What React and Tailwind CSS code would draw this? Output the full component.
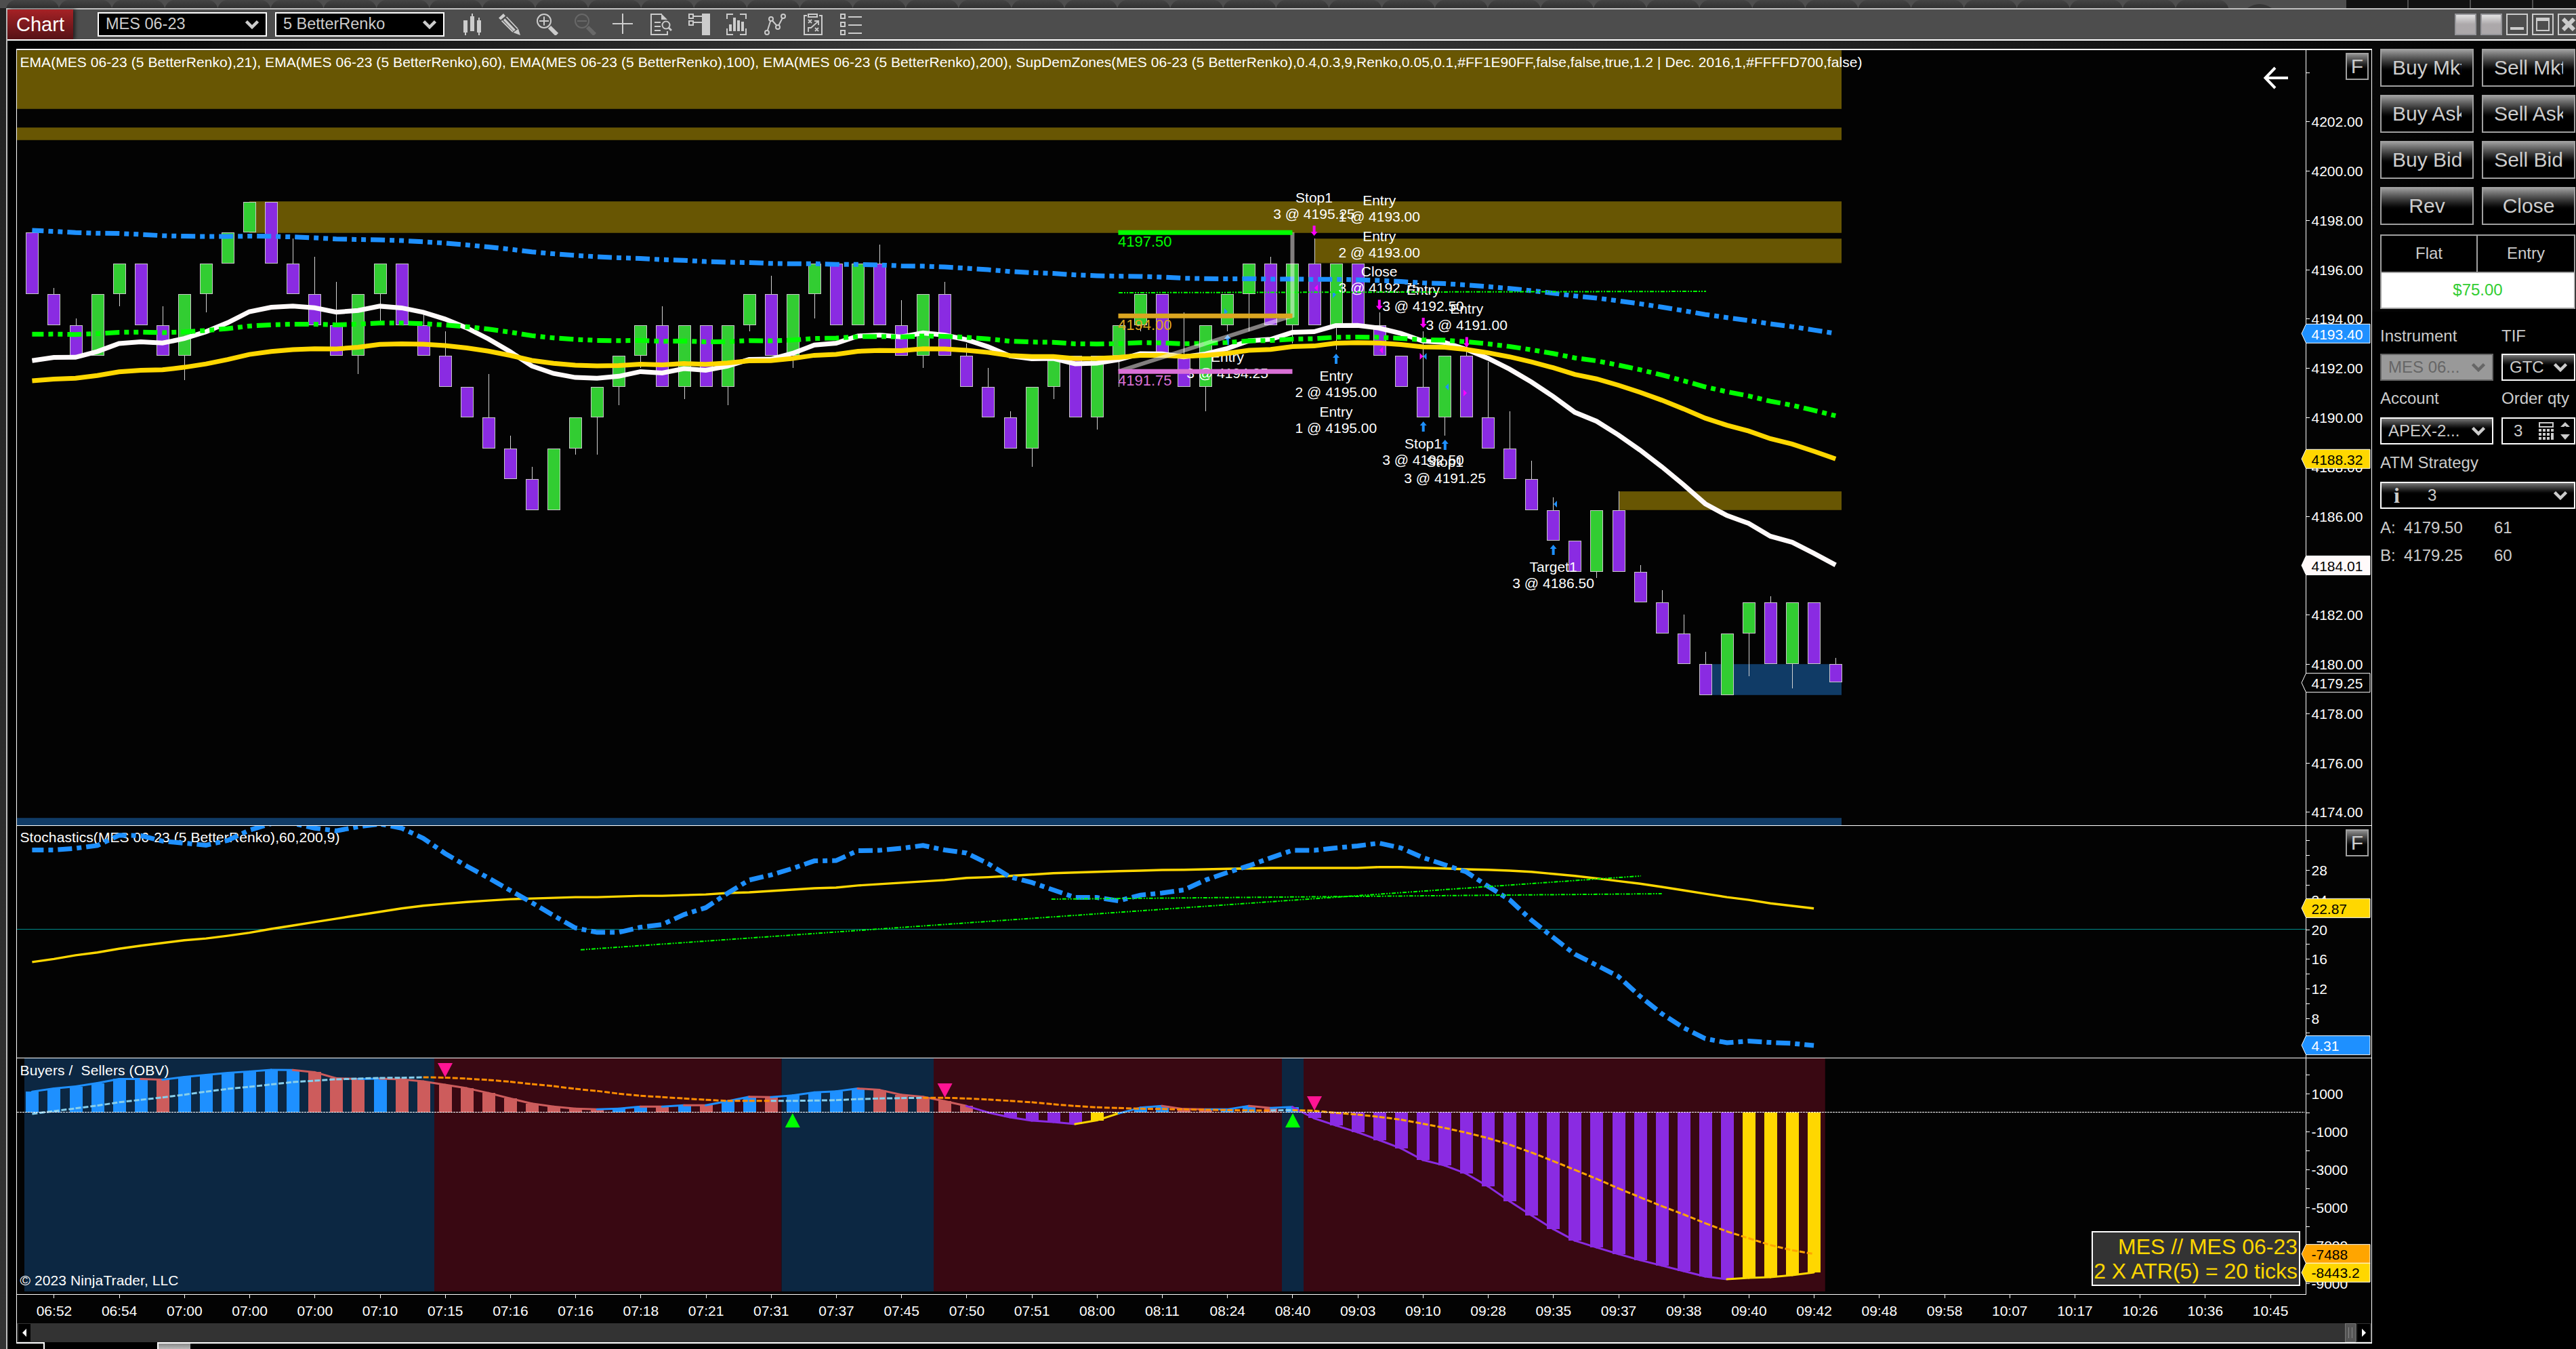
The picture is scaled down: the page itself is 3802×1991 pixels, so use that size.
import { useState } from 'react';

const FONT = "font-['Liberation_Sans',Arial,sans-serif]";

// Chart geometry
const X0 = 47.4;
const STEP = 32.07;
const barX = (i) => X0 + STEP * i;
const priceY = (p) => 179.2 + (4202 - p) * 36.4;
const stochY = (v) => 1371.5 - (v - 20) * 10.92;
const obvY = (v) => 1641.5 - v * 0.028;
// lower panes store their series in pane units
const paneY = (v) => 1200 + v / 1.9823;
// body levels are 5 ticks (1.25 points) apart
const level = (n) => 4198.75 - n * 1.25;

// [direction, top level, bottom level, high, low]
const BARS = [
  ['d', 1, 3], ['d', 3, 4, 4195.25], ['d', 4, 5, 4194], ['u', 3, 5], ['u', 2, 3, 0, 4194.5],
  ['d', 2, 4], ['d', 4, 5, 4194.5], ['u', 3, 5, 0, 4191.5], ['u', 2, 3, 0, 4194.25], ['u', 1, 2],
  ['u', 0, 1], ['d', 0, 2], ['d', 2, 3, 4197.25], ['d', 3, 4, 4196.5], ['d', 4, 5, 4195.5],
  ['u', 3, 5, 0, 4191.75], ['u', 2, 3, 0, 4193.75], ['d', 2, 4], ['d', 4, 5, 4194.25], ['d', 5, 6, 4193.5],
  ['d', 6, 7], ['d', 7, 8, 4191.75], ['d', 8, 9, 4189.25], ['d', 9, 10, 4188], ['u', 8, 10],
  ['u', 7, 8, 0, 4188.5], ['u', 6, 7, 0, 4188.5], ['u', 5, 6, 0, 4190.5], ['u', 4, 5, 0, 4192], ['d', 4, 6, 4194.5],
  ['u', 4, 6, 0, 4190.75], ['d', 4, 6], ['u', 4, 6, 0, 4190.5], ['u', 3, 4, 0, 4193.5], ['d', 3, 5, 4195.75],
  ['u', 3, 5, 0, 4192], ['u', 2, 3, 0, 4194], ['d', 2, 4], ['u', 2, 4], ['d', 2, 4, 4197],
  ['d', 4, 5, 4194.75], ['u', 3, 5, 0, 4192], ['d', 3, 5, 4195.5], ['d', 5, 6, 4193], ['d', 6, 7, 4192],
  ['d', 7, 8, 4190.25], ['u', 6, 8, 0, 4188], ['u', 5, 6, 0, 4190.75], ['d', 5, 7], ['u', 5, 7, 0, 4189.5],
  ['u', 4, 5, 0, 4191.25], ['u', 3, 4, 0, 4193.5], ['d', 3, 5], ['d', 5, 6, 4194.25], ['u', 4, 6, 0, 4190.25],
  ['u', 3, 4, 0, 4193.5], ['u', 2, 3, 0, 4193.5], ['d', 2, 4, 4196.5], ['u', 2, 4, 0, 4193], ['d', 2, 4, 4197.25],
  ['u', 2, 4, 0, 4192.75], ['d', 2, 4], ['d', 4, 5, 4194.25], ['d', 5, 6], ['d', 6, 7, 4193.5],
  ['u', 5, 7, 0, 4189.25], ['d', 5, 7, 4193], ['d', 7, 8, 4192.25], ['d', 8, 9, 4190.25], ['d', 9, 10, 4188.25],
  ['d', 10, 11, 4186.75], ['d', 11, 12], ['u', 10, 12, 0, 4183.5], ['d', 10, 12, 4187], ['d', 12, 13, 4184],
  ['d', 13, 14, 4183], ['d', 14, 15, 4182], ['d', 15, 16, 4180.5], ['u', 14, 16], ['u', 13, 14, 0, 4179.5],
  ['d', 13, 15, 4182.75], ['u', 13, 15, 0, 4179], ['d', 13, 15], ['d', 15, 15.6, 4180.25],
];

const CLOSES = BARS.map(([dir, top, bottom]) => level(dir === 'u' ? top : bottom));

const ema = (period, seed) => {
  const k = 2 / (period + 1);
  let v = seed;
  return CLOSES.map((c, i) => {
    if (i > 0) v += k * (c - v);
    return v;
  });
};

const toPoints = (values, fy) => values.map((v, i) => `${barX(i).toFixed(1)},${fy(v).toFixed(1)}`).join(' ');

const STOCH_K = [
  108, 108, 103, 95, 65, 66, 82, 88, 94, 80, 50, 31, 30, 44, 52, 40, 32, 44, 74, 118, 155, 190, 226, 262, 300, 336, 349, 349,
  334, 326, 297, 277, 235, 196, 181, 162, 140, 139, 110, 109, 103, 95, 108, 117, 148, 187, 203, 225, 247, 247, 257, 240, 234,
  225, 196, 174, 154, 131, 109, 109, 102, 96, 88, 102, 130, 151, 172, 214, 254, 313, 364, 413, 445, 478, 536, 587, 628, 660,
  672, 667, 671, 674, 680,
];

const STOCH_D = [
  436, 427, 416, 408, 397, 388, 380, 372, 367, 359, 350, 339, 329, 319, 309, 299, 289, 279, 271, 265.5, 260, 256, 252, 250,
  248, 246, 246, 244, 242, 242, 240, 238, 234, 232, 228, 224, 220, 218, 212, 208, 204, 200, 196, 190, 187.5, 184, 180, 176,
  174, 172, 170, 168.5, 166.5, 166, 164.5, 163, 162, 160.5, 160.5, 160.5, 160.5, 160.5, 158, 158, 160, 162, 164.5, 166,
  168.5, 172, 178, 184, 191, 199, 206.5, 216, 226, 236, 246, 254, 264, 271.5, 279,
];

const OBV = [
  815, 806, 800, 790, 778, 778, 780, 772, 766, 760, 756, 751.5, 752, 758, 776, 778, 777, 779, 785, 795, 805, 819, 835, 850,
  859, 865, 867, 865, 859, 859, 855, 855, 843, 830, 831, 826, 817, 814, 806, 810, 824, 830, 843, 857, 876, 890, 900, 904, 910,
  899, 879, 862, 857, 866, 867, 867, 857, 863, 860, 893, 914, 934, 957, 981, 1015, 1031, 1055, 1092, 1136, 1177, 1217, 1251,
  1271, 1290, 1308, 1324, 1340, 1356, 1364, 1360, 1358, 1352, 1344,
];
// one letter for each bar: b = rising, r = falling, p = below zero, y = recovering
const OBV_KEYS = 'bbbbbbrbbbbbbrrrbrrrrrrrrrrbbrbrbbrbbbbrrrrrpppppyybbrrbbrb' + 'p'.repeat(20) + 'yyyy';

const OBV_AVG = [
  880, 872, 864, 856, 846, 839, 832, 824, 815, 807, 801, 794, 787, 783, 779, 777, 775, 774.5, 773, 774, 777, 781, 786, 793,
  799, 807, 813, 821, 827, 831, 835, 839, 842, 842, 842, 842, 841, 840, 837, 835, 834, 833, 833, 835, 838, 842, 846, 852, 857,
  861, 863, 865, 866, 867, 868, 869, 870, 870, 869, 871, 877, 882, 889, 897, 909, 921, 935, 951, 970, 993, 1018, 1044, 1070,
  1098, 1124, 1150, 1174, 1200, 1224, 1244, 1264, 1279, 1290,
];

const OBV_COLORS = { b: '#1e90ff', r: '#cd5c5c', p: '#8a2be2', y: '#ffd700' };

const TIMES = [
  '06:52', '06:54', '07:00', '07:00', '07:00', '07:10', '07:15', '07:16', '07:16', '07:18', '07:21', '07:31', '07:37', '07:45',
  '07:50', '07:51', '08:00', '08:11', '08:24', '08:40', '09:03', '09:10', '09:28', '09:35', '09:37', '09:38', '09:40', '09:42',
  '09:48', '09:58', '10:07', '10:17', '10:26', '10:36', '10:45',
];

// [x, first baseline, name, fill]
const EXECUTIONS = [
  [1939.5, 299, 'Stop1', '3 @ 4195.25'],
  [2035.7, 303, 'Entry', '1 @ 4193.00'],
  [2035.7, 356, 'Entry', '2 @ 4193.00'],
  [2035.7, 408, 'Close', '3 @ 4192.75'],
  [2100.5, 435, 'Entry', '3 @ 4192.50'],
  [2164.7, 463, 'Entry', '3 @ 4191.00'],
  [1971.9, 562, 'Entry', '2 @ 4195.00'],
  [1971.9, 614.5, 'Entry', '1 @ 4195.00'],
  [2100.5, 662, 'Stop1', '3 @ 4192.50'],
  [2132.6, 689, 'Stop1', '3 @ 4191.25'],
  [1811.6, 534, 'Entry', '3 @ 4194.25'],
  [2292.6, 844, 'Target1', '3 @ 4186.50'],
];

const UP_ARROWS = [[1811.8, 494], [1972, 522], [2100.7, 622], [2132.8, 649], [2292.6, 804]];
const DOWN_ARROWS = [[1939.6, 348], [2035.8, 457.5], [2100.7, 484], [2164.8, 512.5]];
// [tip x, centre y, side the base is on, colour]
const FILLS = [
  [1812, 460, -1, '#1e90ff'], [1972, 435, -1, '#1e90ff'], [1940, 425, 1, '#ff00ff'], [2036, 517, 1, '#ff00ff'],
  [2100.5, 526, -1, '#ff00ff'], [2100.5, 526, 1, '#1e90ff'], [2133, 571, 1, '#1e90ff'], [2165, 580, -1, '#ff00ff'],
  [2293, 744, 1, '#1e90ff'],
];

function PriceTag({ y, text, fill, color = '#fff' }) {
  return (
    <g>
      <path d={`M3397 ${y}L3403.5 ${y - 14}H3498V${y + 14}H3403.5Z`} fill={fill} stroke="#fff" />
      <text x="3411.5" y={y + 8.2} fill={color}>{text}</text>
    </g>
  );
}

function Tick({ y, label }) {
  return (
    <g>
      <path d={`M3403 ${Math.round(y) + 0.5}h6`} stroke="#fff" />
      {label && <text x="3411.5" y={y + 8} fill="#fff">{label}</text>}
    </g>
  );
}

function AxisLine() {
  return <path d="M3403.5 74V1911" stroke="#fff" />;
}

function Candles() {
  return (
    <g shapeRendering="crispEdges">
      {BARS.map(([dir, top, bottom, high, low], i) => {
        const x = Math.round(barX(i));
        const y1 = Math.round(priceY(level(top)));
        const y2 = Math.round(priceY(level(bottom)));
        return (
          <g key={i}>
            {high ? <rect x={x} y={priceY(high)} width="1" height={y1 - priceY(high)} fill="#d3d3d3" /> : null}
            {low ? <rect x={x} y={y2} width="1" height={priceY(low) - y2} fill="#d3d3d3" /> : null}
            <rect x={x - 9} y={y1} width="19" height={y2 - y1} fill="#c8c8c8" />
            <rect x={x - 8} y={y1 + 1} width="17" height={y2 - y1 - 2} fill={dir === 'u' ? '#32cd32' : '#8a2be2'} />
          </g>
        );
      })}
    </g>
  );
}

function Zone({ x, y, width, height, blue }) {
  return (
    <g>
      <rect x={x} y={y} width={width} height={height} fill={blue ? '#0d2f52' : '#4f4203'} />
      <rect x={x} y={y + 1} width={width} height={height - 2} fill={blue ? '#103b66' : '#685603'} />
    </g>
  );
}

function PricePane() {
  const dash = '21 7 7 7 7 7';
  return (
    <svg className="block" width="3475" height="1145" viewBox="25 74 3475 1145" fontSize="21">
      <Zone x={25} y={74} width={2693} height={87} />
      <Zone x={25} y={188} width={2693} height={19} />
      <Zone x={368} y={297} width={2350} height={47} />
      <Zone x={1940} y={352} width={778} height={36.5} />
      <Zone x={2389} y={725} width={329} height={28} />
      <Zone x={2517} y={980} width={201} height={46} blue />
      <Zone x={25} y={1207} width={2693} height={14} blue />
      <Candles />

      {UP_ARROWS.map(([x, y]) => (
        <path key={`u${x}`} d={`M${x} ${y}l5 6h-3v9h-4v-9h-3z`} fill="#1e90ff" />
      ))}
      {DOWN_ARROWS.map(([x, y]) => (
        <path key={`d${x}`} d={`M${x} ${y}l5 -6h-3v-9h-4v9h-3z`} fill="#ff00ff" />
      ))}
      {FILLS.map(([x, y, side, color], i) => (
        <path key={i} d={`M${x} ${y}l${side * 5} -5v10z`} fill={color} />
      ))}
      <g fill="#fff" textAnchor="middle">
        {EXECUTIONS.map(([x, y, name, fill], i) => (
          <g key={i}>
            <text x={x} y={y}>{name}</text>
            <text x={x} y={y + 24}>{fill}</text>
          </g>
        ))}
      </g>

      {/* Moving averages */}
      <g fill="none" strokeWidth="7">
        <polyline points={toPoints(ema(21, 4192.3), priceY)} stroke="#fffafa" />
        <polyline points={toPoints(ema(60, 4191.48), priceY)} stroke="#ffd700" />
        <polyline points={toPoints(ema(100, 4193.37), priceY)} stroke="#00ff00" strokeDasharray={dash} strokeDashoffset="4" />
        <polyline points={toPoints(ema(200, 4197.58), priceY)} stroke="#1e90ff" strokeDasharray={dash} strokeDashoffset="4" />
      </g>

      {/* Risk / reward */}
      <path d="M1651 432L2518 430" stroke="#00ff00" strokeWidth="2" strokeDasharray="6 2 2 2 2 2" />
      <path d="M1651 548L1907.5 466V343" fill="none" stroke="#fffafa" strokeOpacity="0.5" strokeWidth="6" />
      <g strokeWidth="7">
        <path d="M1650.5 343.3h257" stroke="#00ff00" />
        <path d="M1650.5 466.3h257" stroke="#daa520" />
        <path d="M1650.5 548.2h257" stroke="#da70d6" />
      </g>
      <g fontSize="22">
        <text x="1650" y="364" fill="#00ff00">4197.50</text>
        <text x="1650" y="487" fill="#daa520">4194.00</text>
        <text x="1650" y="569" fill="#da70d6">4191.75</text>
      </g>

      <text x="29.5" y="98.5" fill="#fff" textLength="2719">
        EMA(MES 06-23 (5 BetterRenko),21), EMA(MES 06-23 (5 BetterRenko),60), EMA(MES 06-23 (5 BetterRenko),100), EMA(MES 06-23 (5 BetterRenko),200), SupDemZones(MES 06-23 (5 BetterRenko),0.4,0.3,9,Renko,0.05,0.1,#FF1E90FF,false,false,true,1.2 | Dec. 2016,1,#FFFFD700,false)
      </text>
      <path d="M3377 115H3344M3358 100L3343.5 115L3358 130" fill="none" stroke="#fff" strokeWidth="4" />

      <AxisLine />
      <Tick y={106.5} />
      {Array.from({ length: 15 }, (_, i) => 4202 - i * 2).map((p) => (
        <Tick key={p} y={priceY(p)} label={p.toFixed(2)} />
      ))}
      <PriceTag y={492.3} text="4193.40" fill="#1e90ff" />
      <PriceTag y={677.3} text="4188.32" fill="#ffd700" color="#000" />
      <PriceTag y={834.5} text="4184.01" fill="#fffafa" color="#000" />
      <PriceTag y={1007.7} text="4179.25" fill="#030303" />
      <path d="M25 1218.5H3500" stroke="#fff" />
    </svg>
  );
}

function StochasticsPane() {
  return (
    <svg className="block" width="3475" height="343" viewBox="25 1219 3475 343" fontSize="21">
      <path d="M25 1371.5H3403" stroke="#008b8b" />
      <text x="29.5" y="1243" fill="#fff" textLength="472">Stochastics(MES 06-23 (5 BetterRenko),60,200,9)</text>
      <polyline points={toPoints(STOCH_D, paneY)} fill="none" stroke="#ffd700" strokeWidth="3.4" />
      <polyline
        points={toPoints(STOCH_K, paneY)}
        fill="none"
        stroke="#1e90ff"
        strokeWidth="7"
        strokeDasharray="21 7 7 7"
        strokeDashoffset="4"
      />
      <g stroke="#00ff00" strokeWidth="2" strokeDasharray="6 2 2 2 2 2">
        <path d="M857 1401.8L2422 1292.8" />
        <path d="M1551.8 1327L2452.7 1319" />
      </g>
      <AxisLine />
      {Array.from({ length: 15 }, (_, i) => 4 + i * 2).map((v) => (
        <Tick key={v} y={stochY(v)} label={v % 4 === 0 && v < 32 && v > 4 ? String(v) : null} />
      ))}
      <PriceTag y={1340.3} text="22.87" fill="#ffd700" color="#000" />
      <PriceTag y={1542.7} text="4.31" fill="#1e90ff" />
      <path d="M25 1561.5H3500" stroke="#fff" />
    </svg>
  );
}

function ObvPane() {
  const zero = 1641.5;
  const regions = [[36, 641, 0], [641, 1153.6, 1], [1153.6, 1378, 0], [1378, 1892, 1], [1892, 1924, 0], [1924, 2693.8, 1]];
  const avgColor = (i) => {
    if (i < 18 || (i >= 34 && i < 41) || i === 57) return '#87ceeb';
    return i >= 58 ? '#ffa500' : '#ff8c00';
  };
  return (
    <svg className="block" width="3475" height="349" viewBox="25 1562 3475 349" fontSize="21">
      {regions.map(([a, b, red]) => (
        <rect key={a} x={a} y="1562" width={b - a} height="344" fill={red ? '#390812' : '#0c2742'} />
      ))}
      <g shapeRendering="crispEdges">
        {OBV.map((v, i) => {
          const y = paneY(v);
          return (
            <rect
              key={i}
              x={Math.round(barX(i)) - 9}
              y={Math.min(y, zero)}
              width="19"
              height={Math.abs(y - zero)}
              fill={OBV_COLORS[OBV_KEYS[i]]}
            />
          );
        })}
      </g>
      {OBV.slice(1).map((v, i) => (
        <path
          key={i}
          d={`M${barX(i)} ${paneY(OBV[i])}L${barX(i + 1)} ${paneY(v)}`}
          stroke={OBV_COLORS[OBV_KEYS[i + 1]]}
          strokeWidth="3"
          strokeLinecap="round"
        />
      ))}
      {OBV_AVG.slice(1).map((v, i) => (
        <path
          key={i}
          d={`M${barX(i)} ${paneY(OBV_AVG[i])}L${barX(i + 1)} ${paneY(v)}`}
          stroke={avgColor(i)}
          strokeWidth="3"
          strokeDasharray="8 3"
        />
      ))}
      <path d="M25 1641.5H3402" stroke="#fff" strokeDasharray="3 1" />
      {[[657, 1590], [1394.6, 1620], [1940, 1639]].map(([x, y]) => (
        <path key={x} d={`M${x} ${y}l-11 -21h22z`} fill="#ff1493" />
      ))}
      {[1169.8, 1908].map((x) => (
        <path key={x} d={`M${x} 1643l-11 21h22z`} fill="#00ff00" />
      ))}
      <text x="29.5" y="1586.5" fill="#fff" xmlSpace="preserve" textLength="220">{'Buyers /  Sellers (OBV)'}</text>
      <text x="29.5" y="1896.5" fill="#fff" textLength="234">© 2023 NinjaTrader, LLC</text>
      <AxisLine />
      {Array.from({ length: 12 }, (_, i) => 2000 - i * 1000).map((v) => (
        <Tick key={v} y={obvY(v)} label={Math.abs(v) % 2000 === 1000 ? String(v) : null} />
      ))}
      <PriceTag y={1850.7} text="-7488" fill="#ffa500" color="#000" />
      <PriceTag y={1878.2} text="-8443.2" fill="#ffd700" color="#000" />
      <path d="M25 1910.5H3404" stroke="#fff" />
    </svg>
  );
}

function TimeAxis() {
  return (
    <svg className="block" width="3475" height="42" viewBox="25 1911 3475 42" fontSize="21">
      {TIMES.map((t, i) => (
        <g key={i}>
          <path d={`M${Math.round(barX(1 + i * 3)) + 0.5} 1911v5`} stroke="#fff" />
          <text x={barX(1 + i * 3) + 0.5} y="1941.5" fill="#fff" textAnchor="middle">{t}</text>
        </g>
      ))}
    </svg>
  );
}

function FixedButton({ className }) {
  return (
    <button
      type="button"
      className={`absolute flex h-10 w-[34px] items-center justify-center border-2 border-[#a0a0a0] bg-gradient-to-b from-[#8f8f8f] to-black to-70% text-[30px] leading-none text-[#ccc] ${className}`}
    >
      F
    </button>
  );
}

function Chevron({ className = 'text-[#ccc]' }) {
  return (
    <svg className={`shrink-0 ${className}`} width="20" height="14" viewBox="0 0 20 14">
      <path d="M1.5 2.5L10 11L18.5 2.5" fill="none" stroke="currentColor" strokeWidth="4.5" />
    </svg>
  );
}

function ToolIcon({ children, dim }) {
  return (
    <svg
      className={dim ? 'text-[#686868]' : 'text-[#ccc]'}
      width="32"
      height="32"
      viewBox="0 0 32 32"
      fill="none"
      stroke="currentColor"
      strokeWidth="2"
    >
      {children}
    </svg>
  );
}

function Toolbar() {
  return (
    <div className="flex h-11 items-center bg-[#4d4d4d] text-[23.5px] leading-none text-[#ccc]">
      <div className="flex h-11 w-[97px] items-center justify-center bg-gradient-to-b from-[#a62125] to-[#561216] text-[29px] text-white shadow-[3px_0_5px_#222]">
        Chart
      </div>
      <div className="ml-9 flex h-9 w-[250px] items-center justify-between border-2 border-white bg-black pl-2.5 pr-2.5">
        MES 06-23
        <Chevron />
      </div>
      <div className="ml-3 flex h-9 w-[250px] items-center justify-between border-2 border-white bg-black pl-2.5 pr-2.5">
        5 BetterRenko
        <Chevron />
      </div>
      <div className="ml-6 flex gap-6">
        {/* candles */}
        <ToolIcon>
          <path d="M4 10h6v18H4zM6 28h2v4H6zM14 4h6v22h-6zM16 0h2v4h-2zM24 10h6v18h-6zM26 6h2v4h-2zM26 28h2v4h-2z" fill="currentColor" stroke="none" />
        </ToolIcon>
        {/* pencil */}
        <ToolIcon>
          <path d="M0 6.5L7 0L10 3.5L3 9.5zM21.5 28L29 22.5L32 32z" fill="currentColor" stroke="none" />
          <path d="M4.5 10.5L21 27M11.5 5L28 22.5" strokeWidth="1.8" />
          <path d="M8 8.5L23.5 25" strokeWidth="3.4" />
        </ToolIcon>
        {/* zoom in */}
        <ToolIcon>
          <circle cx="11" cy="11" r="10" />
          <path d="M11 4.5v13M4 11h14" />
          <path d="M19 20L30 31" strokeWidth="6" />
        </ToolIcon>
        {/* zoom out */}
        <ToolIcon dim>
          <circle cx="11" cy="11" r="10" />
          <path d="M4 11h14" />
          <path d="M19 20L30 31" strokeWidth="6" />
        </ToolIcon>
        {/* crosshair */}
        <ToolIcon>
          <path d="M15 0v30M0 15h30" />
        </ToolIcon>
        {/* data box */}
        <ToolIcon>
          <path d="M17 1H1v30h24v-5M6 13h9M6 19h9M6 25h9" />
          <path d="M16 0L25 9H16z" fill="currentColor" stroke="none" />
          <circle cx="23" cy="17" r="5.5" />
          <path d="M26.5 20.5L31 25" strokeWidth="3" />
        </ToolIcon>
        {/* chart trader */}
        <ToolIcon>
          <path d="M1 1h6v6H1zM1 11h6v6H1zM8 4h12M8 13h12" />
          <path d="M20 0h12v32H20z" fill="currentColor" stroke="none" />
        </ToolIcon>
        {/* data series */}
        <ToolIcon>
          <path d="M10 1H1v7M20 1h9v7M1 22v9h9M29 22v9h-9" />
          <path d="M4 16h4v10H4zM10 6h4v20h-4zM16 10h4v16h-4zM22 12h4v14h-4z" fill="currentColor" stroke="none" />
        </ToolIcon>
        {/* indicators */}
        <ToolIcon>
          <circle cx="4" cy="28" r="3" />
          <circle cx="10" cy="8" r="3" />
          <circle cx="20" cy="20" r="3" />
          <circle cx="28" cy="4" r="3" />
          <path d="M4.8 25L9.2 11M12 10.5L18.2 17.5M21.4 17.2L26.8 6.8" />
        </ToolIcon>
        {/* strategies */}
        <ToolIcon>
          <path d="M7 3H3v28h26V3h-4M9 1h13v4H9z" />
          <path d="M9 9l5 5M14 9l-5 5M19 21l5 5M24 21l-5 5M9 27v-6h4l10-9M18 11h6v6" strokeWidth="1.8" />
        </ToolIcon>
        {/* properties */}
        <ToolIcon>
          <path d="M1 1h6v6H1zM1 13h6v6H1zM1 25h6v6H1zM12 5h20M12 17h20M12 29h20" />
        </ToolIcon>
      </div>
      <div className="ml-auto -mr-[5px] flex shrink-0 gap-1.5">
        <div className="h-8 w-8 border-2 border-[#96969a] bg-gradient-to-b from-[#e2e2e2] to-[#aca8aa] to-50%" />
        <div className="h-8 w-8 border-2 border-[#96969a] bg-gradient-to-b from-[#e2e2e2] to-[#aca8aa] to-50%" />
        <div className="flex h-8 w-8 items-end justify-center border-2 border-[#ccc] pb-1.5">
          <div className="h-1 w-5 bg-[#ccc]" />
        </div>
        <div className="flex h-8 w-8 items-center justify-center border-2 border-[#ccc]">
          <div className="h-5 w-5 border-2 border-t-[5px] border-[#ccc]" />
        </div>
        <div className="flex h-8 w-8 items-center justify-center border-2 border-[#ccc]">
          <svg className="block shrink-0" width="20" height="20" viewBox="0 0 20 20">
            <path d="M2 2L18 18M18 2L2 18" stroke="#ccc" strokeWidth="6" />
          </svg>
        </div>
      </div>
    </div>
  );
}

function OrderButton({ label }) {
  return (
    <button
      type="button"
      className="flex h-14 w-[138px] items-center justify-center border-2 border-[#a0a0a0] bg-gradient-to-b from-[#9c9c9c] to-black to-65% text-[30px] leading-none text-[#ccc]"
    >
      <span className="max-w-[102px] overflow-hidden whitespace-nowrap py-2">{label}</span>
    </button>
  );
}

const SELECT = 'flex h-10 items-center justify-between border-2 border-white bg-gradient-to-b from-[#777] to-black to-50% px-2.5';

function ChartTrader() {
  const [quantity] = useState(3);
  return (
    <div className="flex w-[302px] flex-col pl-3 text-2xl leading-none text-[#ccc]">
      <div className="grid w-[288px] grid-cols-2 justify-between gap-3">
        {['Buy Mkt', 'Sell Mkt', 'Buy Ask', 'Sell Ask', 'Buy Bid', 'Sell Bid', 'Rev', 'Close'].map((label) => (
          <OrderButton key={label} label={label} />
        ))}
      </div>
      <div className="mt-3.5 w-[288px] border-2 border-[#a0a0a0]">
        <div className="grid h-[53px] grid-cols-2 bg-black">
          <div className="flex items-center justify-center border-r-2 border-[#a0a0a0] pb-0.5">Flat</div>
          <div className="flex items-center justify-center pb-0.5">Entry</div>
        </div>
        <div className="flex h-[53px] items-center justify-center border-t-2 border-[#a0a0a0] bg-white pb-0.5 text-[#32cd32]">$75.00</div>
      </div>

      <div className="mt-5 flex h-[46px] w-[288px] pt-2">
        <div className="w-[179px]">Instrument</div>
        <div>TIF</div>
      </div>
      <div className="flex w-[288px] gap-3">
        <div className="flex h-10 w-[167px] items-center justify-between border-2 border-[#666] bg-[#999] px-2.5 text-[#666]">
          MES 06...
          <Chevron className="text-[#666]" />
        </div>
        <div className={`w-[109px] ${SELECT}`}>
          GTC
          <Chevron />
        </div>
      </div>
      <div className="flex h-[54px] w-[288px] pt-3.5">
        <div className="w-[179px]">Account</div>
        <div className="whitespace-nowrap">Order qty</div>
      </div>
      <div className="flex w-[288px] gap-3">
        <div className={`w-[167px] ${SELECT}`}>
          APEX-2...
          <Chevron />
        </div>
        <div className="flex h-10 w-[109px] items-center border-2 border-white bg-black pl-4">
          {quantity}
          <svg className="ml-6" width="22" height="26" viewBox="0 0 22 26">
            <path d="M1 1h20v6H1z" fill="none" stroke="#ccc" strokeWidth="2" />
            <path d="M0 10h4v4H0zM6 10h4v4H6zM12 10h4v4h-4zM18 10h4v4h-4zM0 16h4v4H0zM6 16h4v4H6zM12 16h4v4h-4zM18 16h4v10h-4zM0 22h4v4H0zM6 22h4v4H6zM12 22h4v4h-4z" fill="#ccc" />
          </svg>
          <svg className="ml-2.5" width="14" height="26" viewBox="0 0 14 26">
            <path d="M7 0L14 7H9L7 5.5L5 7H0zM7 26L14 18H0z" fill="#ccc" />
          </svg>
        </div>
      </div>
      <div className="h-[55px] pt-[15px]">ATM Strategy</div>
      <div className={`w-[288px] ${SELECT}`}>
        <div className="flex items-center">
          <span className="w-[58px] pl-2 font-['Liberation_Serif',serif] text-[32px] font-bold leading-none">i</span>
          3
        </div>
        <Chevron />
      </div>
      <div className="mt-4 grid grid-cols-[35px_133px_100px] gap-y-[17px]">
        <div>A:</div>
        <div>4179.50</div>
        <div>61</div>
        <div>B:</div>
        <div>4179.25</div>
        <div>60</div>
      </div>
    </div>
  );
}

// Tabs of the workspace window behind this one
function BackdropTabs() {
  const domes = Array.from({ length: 42 }, (_, i) => 9 + i * 78.1);
  return (
    <svg className="block shrink-0" width="3802" height="12" viewBox="0 0 3802 12">
      <defs>
        <linearGradient id="dome" x1="0" y1="0" x2="0" y2="1">
          <stop offset="0" stopColor="#454545" />
          <stop offset="1" stopColor="#313131" />
        </linearGradient>
      </defs>
      <rect width="3463" height="12" fill="#4e4e4e" />
      {domes.map((x) => (
        <path key={x} d={`M${x} 12Q${x + 3} 2 ${x + 12} 0H${x + 66}Q${x + 75} 2 ${x + 78} 12Z`} fill="url(#dome)" />
      ))}
      <path d="M3317 12Q3335 0 3353 12Z" fill="#363636" />
      <rect x="3463" width="339" height="12" fill="#111" />
      <path d="M3554 0v12M3646 0v12M3738 0v12" stroke="#4e4e4e" strokeWidth="2" />
    </svg>
  );
}

export default function App() {
  return (
    <div className={`flex h-[1991px] w-[3802px] flex-col overflow-hidden bg-black ${FONT}`}>
      <BackdropTabs />
      <div className="flex min-h-0 grow">
        <div className="w-[9px] shrink-0 bg-gradient-to-b from-[#222] to-[#333]" />
        <div className="flex min-w-0 grow flex-col border-l-2 border-t-2 border-[#c0c0c0] bg-black">
          <Toolbar />
          <div className="h-0.5 shrink-0 bg-white" />
          <div className="flex min-h-0 grow flex-col bg-[linear-gradient(100deg,#000_0%,#3e3e3e_38%,#222_70%,#000_96%)] bg-[length:100%_400px] bg-no-repeat">
            <div className="flex grow pt-3">
              <div className="w-[13px] shrink-0 bg-black" />
              <div className="relative w-[3477px] shrink-0 border-x border-b-2 border-t-2 border-white bg-[#030303]">
                <PricePane />
                <StochasticsPane />
                <ObvPane />
                <TimeAxis />
                <div className="flex h-7 items-center justify-between bg-[#333] px-0.5">
                  <div className="flex h-[26px] w-[18px] items-center justify-center bg-black">
                    <svg width="6" height="12" viewBox="0 0 6 12">
                      <path d="M6 0L0 6L6 12z" fill="#fff" />
                    </svg>
                  </div>
                  <div className="flex h-[26px] items-center">
                    <div className="mr-0.5 flex h-7 w-4 items-center justify-center gap-1 border border-[#777] bg-[#555]">
                      <div className="h-4 w-px bg-[#888]" />
                      <div className="h-4 w-px bg-[#888]" />
                    </div>
                    <div className="flex h-[26px] w-[19px] items-center justify-center bg-black">
                      <svg width="6" height="12" viewBox="0 0 6 12">
                        <path d="M0 0L6 6L0 12z" fill="#fff" />
                      </svg>
                    </div>
                  </div>
                </div>
                <FixedButton className="right-1 top-1" />
                <FixedButton className="right-1 top-[1150px]" />
                <div className="absolute bottom-[83px] right-[105px] h-[81px] w-[308px] whitespace-nowrap border-2 border-white bg-[#333] pr-0.5 pt-[3px] text-right text-[32px] leading-9 text-[#ffd700]">
                  <div>MES // MES 06-23</div>
                  <div>2 X ATR(5) = 20 ticks</div>
                </div>
              </div>
              <ChartTrader />
            </div>
            {/* Tab strip */}
            <div className="flex h-2 shrink-0 bg-black pl-[53px]">
              <div className="relative -mt-0.5 h-2.5 w-[170px] border-x-2 border-white bg-black" />
              <div className="h-2 w-[47px] bg-gradient-to-b from-[#888] to-[#bbb]" />
            </div>
          </div>
        </div>
      </div>
    </div>
  );
}
